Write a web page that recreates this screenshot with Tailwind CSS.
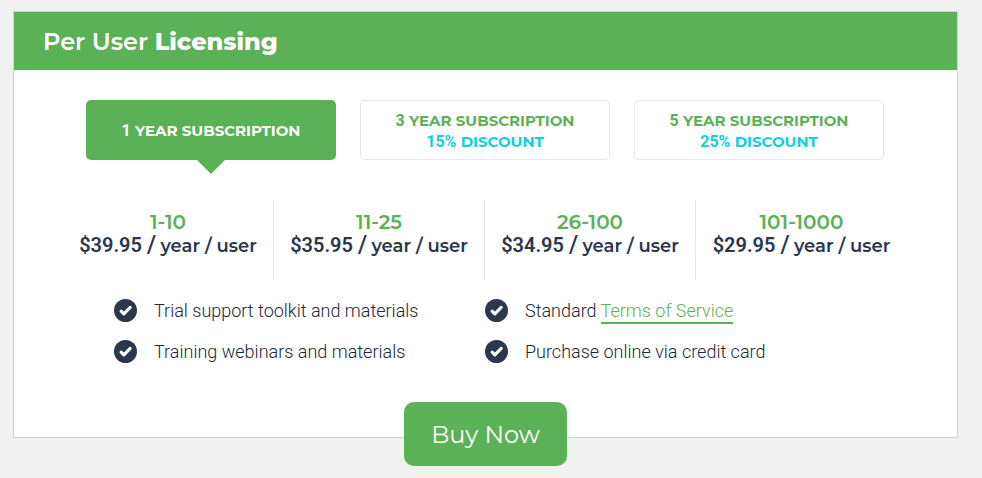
<!DOCTYPE html>
<html lang="en">
<head>
<meta charset="utf-8">
<meta name="viewport" content="width=device-width, initial-scale=1">
<title>Per User Licensing</title>
<script src="https://cdn.jsdelivr.net/npm/@tailwindcss/browser@4"></script>
</head>
<body class="min-h-screen bg-[#f1f1f1] pt-[11px] pr-6 pb-10 pl-[13px] font-[Montserrat,Inter,sans-serif] text-[#2c374b]">
<svg class="hidden" aria-hidden="true">
  <symbol id="check" viewBox="0 0 23 23">
    <circle cx="11.5" cy="11.5" r="11.5" fill="#2c374b"/>
    <path d="M7.1 12.1 9.9 14.9 16.2 8.4" fill="none" stroke="#fff" stroke-width="3.1" stroke-linecap="round" stroke-linejoin="round"/>
  </symbol>
</svg>
<main class="border border-[#d3d3d3] bg-white">
  <header class="bg-[#5bb155] px-[29px] pt-[13px] pb-[11px]">
    <h1 class="text-2xl leading-[34px] font-semibold text-white">Per User <strong class="font-extrabold">Licensing</strong></h1>
  </header>

  <div class="grid grid-cols-3 gap-6 pt-[30px] pr-[73px] pl-[72px] text-[15px] leading-[21px] font-bold text-[#5bb155]">
    <button type="button" aria-pressed="true" class="relative h-[60px] rounded-[5px] bg-[#5bb155] text-white">
      <span class="font-[Roboto,sans-serif] text-base leading-[21px]">1</span> YEAR SUBSCRIPTION
      <span class="absolute top-full left-1/2 size-0 -translate-x-1/2 border-x-14 border-t-14 border-x-transparent border-t-[#5bb155]"></span>
    </button>
    <button type="button" aria-pressed="false" class="h-[60px] rounded-[5px] border border-[#e6e6e6] pt-0.5">
      <span class="block"><span class="font-[Roboto,sans-serif] text-base leading-[21px]">3</span> YEAR SUBSCRIPTION</span>
      <span class="block text-[#0fd0e0]"><span class="font-[Roboto,sans-serif] text-base leading-[21px]">15%</span> DISCOUNT</span>
    </button>
    <button type="button" aria-pressed="false" class="h-[60px] rounded-[5px] border border-[#e6e6e6] pt-0.5">
      <span class="block"><span class="font-[Roboto,sans-serif] text-base leading-[21px]">5</span> YEAR SUBSCRIPTION</span>
      <span class="block text-[#0fd0e0]"><span class="font-[Roboto,sans-serif] text-base leading-[21px]">25%</span> DISCOUNT</span>
    </button>
  </div>

  <dl class="mt-10 grid grid-cols-4 divide-x divide-[#e6e6e6] pr-[50px] pl-[49px] text-center text-lg font-semibold whitespace-nowrap">
    <div class="h-20 pt-2.5">
      <dt class="text-xl leading-6 text-[#5bb155]">1-10</dt>
      <dd class="leading-[22px]"><span class="text-xl leading-[22px]"><span class="font-[Roboto,sans-serif]">$39.95</span> / </span>year / user</dd>
    </div>
    <div class="h-20 pt-2.5">
      <dt class="text-xl leading-6 text-[#5bb155]">11-25</dt>
      <dd class="leading-[22px]"><span class="text-xl leading-[22px]"><span class="font-[Roboto,sans-serif]">$35.95</span> / </span>year / user</dd>
    </div>
    <div class="h-20 pt-2.5">
      <dt class="text-xl leading-6 text-[#5bb155]">26-100</dt>
      <dd class="leading-[22px]"><span class="text-xl leading-[22px]"><span class="font-[Roboto,sans-serif]">$34.95</span> / </span>year / user</dd>
    </div>
    <div class="h-20 pt-2.5">
      <dt class="text-xl leading-6 text-[#5bb155]">101-1000</dt>
      <dd class="leading-[22px]"><span class="text-xl leading-[22px]"><span class="font-[Roboto,sans-serif]">$29.95</span> / </span>year / user</dd>
    </div>
  </dl>

  <ul class="mt-4 grid grid-cols-2 gap-y-3 pr-[101px] pl-[100px] font-[Roboto,sans-serif] text-lg leading-7 font-light text-[#212733]">
    <li class="flex items-center gap-[17px]"><svg class="size-[23px] shrink-0" aria-hidden="true"><use href="#check"/></svg><span class="pt-px">Trial support toolkit and materials</span></li>
    <li class="flex items-center gap-[17px]"><svg class="size-[23px] shrink-0" aria-hidden="true"><use href="#check"/></svg><span class="pt-px">Standard <a href="#terms" class="border-b-2 border-[#5bb155] pb-px text-[#5bb155]">Terms of Service</a></span></li>
    <li class="flex items-center gap-[17px]"><svg class="size-[23px] shrink-0" aria-hidden="true"><use href="#check"/></svg><span class="pt-px">Training webinars and materials</span></li>
    <li class="flex items-center gap-[17px]"><svg class="size-[23px] shrink-0" aria-hidden="true"><use href="#check"/></svg><span class="pt-px">Purchase online via credit card</span></li>
  </ul>

  <div class="-mb-[29px] flex justify-center pt-9">
    <button type="button" class="h-16 rounded-[10px] bg-[#5bb155] px-[27px] pt-0.5 text-2xl text-white">Buy Now</button>
  </div>
</main>
</body>
</html>
